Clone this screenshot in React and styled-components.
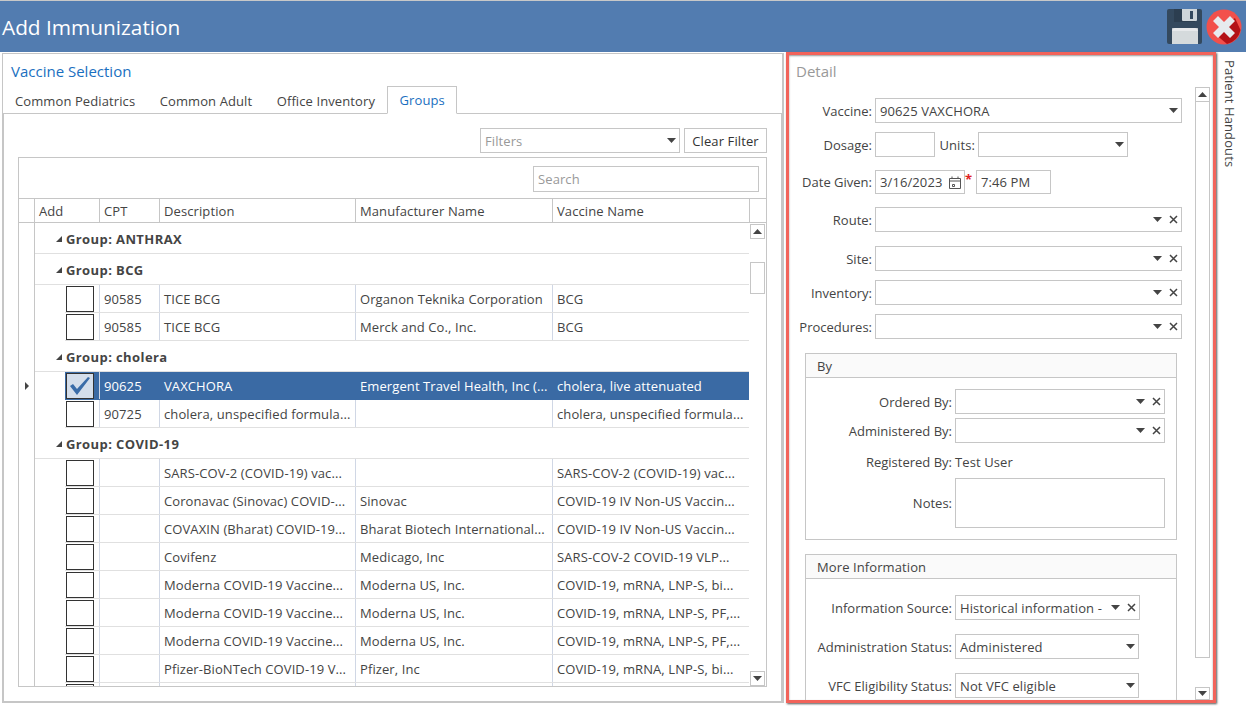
import React from "react";
import styled, { createGlobalStyle } from "styled-components";

const line = "#c6c6c6";
const textColor = "#444";

const GlobalStyle = createGlobalStyle`
  html, body { margin: 0; padding: 0; background: #fff; overflow: hidden; }
  * { box-sizing: border-box; }
  body { font-family: "Open Sans", "Noto Sans", sans-serif; font-size: 13px; letter-spacing: .1px; color: ${textColor}; }
`;

const Page = styled.div`
  width: 1246px;
  height: 706px;
  display: flex;
  flex-direction: column;
  overflow: hidden;
`;

const TitleBar = styled.header`
  height: 52px;
  flex-shrink: 0;
  background: #527cb0;
  border-top: 1px solid #c8c8c8;
  display: flex;
  align-items: center;
  padding: 0 4px 0 2px;
  color: #fff;
`;

const TitleText = styled.h1`
  flex: 1;
  margin: 0;
  font-size: 20.8px;
  font-weight: 400;
  letter-spacing: 0;
`;

const Main = styled.div`
  flex: 1;
  display: flex;
  padding: 1px 0 3px 2px;
  min-height: 0;
`;

const LeftPanel = styled.section`
  width: 782px;
  border: 1px solid ${line};
  border-right-width: 2px;
  display: flex;
  flex-direction: column;
  min-height: 0;
`;

const SectionTitle = styled.div`
  height: 33px;
  padding: 7px 0 0 8px;
  font-size: 15px;
  letter-spacing: 0;
  color: #1a6fc0;
`;

const Tabs = styled.div`
  height: 26px;
  margin-left: -0.25px;
  display: flex;
  align-items: stretch;
`;

const Tab = styled.div`
  display: flex;
  align-items: center;
  padding: 0 11.25px;
  color: ${(p) => (p.$active ? "#1a6fc0" : textColor)};
  border: 1px solid ${(p) => (p.$active ? line : "transparent")};
  border-bottom: ${(p) => (p.$active ? "1px solid #fff" : "none")};
  position: relative;
  z-index: 1;
  height: ${(p) => (p.$active ? "28px" : "26px")};
  margin-top: ${(p) => (p.$active ? "-1px" : "0")};
  white-space: nowrap;
`;

const TabBody = styled.div`
  flex: 1;
  min-height: 0;
  border: 1px solid ${line};
  padding: 14px 14px 14px 14px;
  display: flex;
  flex-direction: column;
`;

const FilterBar = styled.div`
  height: 25px;
  margin-bottom: 4px;
  display: flex;
  justify-content: flex-end;
  gap: 4px;
  flex-shrink: 0;
`;

const Box = styled.div`
  height: ${(p) => p.$h || 25}px;
  width: ${(p) => (p.$w ? `${p.$w}px` : "auto")};
  flex: ${(p) => (p.$w ? "none" : "1")};
  border: 1px solid ${line};
  background: #fff;
  display: flex;
  align-items: center;
  padding: 0 3px 0 4px;
  white-space: nowrap;
  overflow: hidden;
`;

const BoxText = styled.span`
  flex: 1;
  overflow: hidden;
  color: ${(p) => (p.$muted ? "#999" : textColor)};
`;

const Btn = styled.button`
  width: 83px;
  height: 25px;
  border: 1px solid ${line};
  background: #fff;
  padding: 0;
  font: inherit;
  letter-spacing: inherit;
  color: #333;
`;

const Grid = styled.div`
  flex: 1;
  min-height: 0;
  border: 1px solid ${line};
  display: flex;
  flex-direction: column;
  overflow: hidden;
  position: relative;
`;

const SearchRow = styled.div`
  height: 41px;
  flex-shrink: 0;
  padding: 8px 7px 0 0;
  display: flex;
  justify-content: flex-end;
  border-bottom: 1px solid ${line};
`;

const HeadRow = styled.div`
  height: 24px;
  flex-shrink: 0;
  display: flex;
  border-bottom: 1px solid ${line};
`;

const HeadCell = styled.div`
  width: ${(p) => p.$w}px;
  flex-shrink: 0;
  border-right: ${(p) => (p.$last ? "none" : `1px solid ${line}`)};
  padding-left: 4px;
  display: flex;
  align-items: center;
`;

const GridBody = styled.div`
  flex: 1;
  min-height: 0;
  display: flex;
  overflow: hidden;
`;

const Rows = styled.div`
  width: 731px;
  flex-shrink: 0;
`;

const GroupRow = styled.div`
  height: 31px;
  display: flex;
`;

const Indicator = styled.div`
  width: 16px;
  flex-shrink: 0;
  border-right: 1px solid ${line};
  display: flex;
  align-items: center;
  justify-content: center;
`;

const GroupCell = styled.div`
  flex: 1;
  margin-right: 1px;
  border-bottom: 1px solid #e0e0e0;
  display: flex;
  align-items: center;
  gap: 4px;
  padding: 2px 0 0 21px;
  font-weight: 700;
  letter-spacing: .4px;
  color: #444;
`;

const DataRow = styled.div`
  height: 28px;
  display: flex;
`;

const RowCells = styled.div`
  flex: 1;
  margin: 0 1px 0 30px;
  display: flex;
  background: ${(p) => (p.$selected ? "#3a6aa4" : "transparent")};
  color: ${(p) => (p.$selected ? "#fff" : textColor)};
  border-bottom: 1px solid ${(p) => (p.$selected ? "#3a6aa4" : "#e0e0e0")};
`;

const CheckCell = styled.div`
  width: 35px;
  flex-shrink: 0;
  padding: 1px 0 0 1px;
  border-right: 1px solid #d0d7e5;
`;

const CheckBox = styled.div`
  width: 28px;
  height: 26px;
  border: 1px solid #333;
  background: ${(p) => (p.$checked ? "#d4deeb" : "#fff")};
  display: flex;
  align-items: center;
  justify-content: center;
`;

const Cell = styled.div`
  width: ${(p) => p.$w}px;
  flex-shrink: 0;
  padding-left: 4px;
  display: flex;
  align-items: center;
  white-space: nowrap;
  overflow: hidden;
  border-right: ${(p) => (p.$selected || p.$last ? "none" : "1px solid #d0d7e5")};
`;

const GridScroll = styled.div`
  width: 17px;
  flex-shrink: 0;
  padding: 1px 2px 0 0;
  display: flex;
  flex-direction: column;
  align-items: stretch;
`;

const ScrollBtn = styled.div`
  height: ${(p) => p.$h || 15}px;
  flex-shrink: 0;
  border: 1px solid ${line};
  background: #fff;
  display: flex;
  align-items: center;
  justify-content: center;
`;

const ScrollThumb = styled.div`
  height: ${(p) => p.$h}px;
  margin-top: ${(p) => p.$mt || 0}px;
  flex-shrink: 0;
  border: 1px solid ${line};
  border-top-width: ${(p) => (p.$flat ? 0 : 1)}px;
`;

const Spacer = styled.div`
  flex: 1;
`;

const RightPanel = styled.section`
  width: 430px;
  margin: -1px 0 0 2px;
  border: 3px solid #f2635a;
  box-shadow: 1px 1px 2px #555, inset 0 1px 2px #999;
  display: flex;
  flex-direction: column;
  min-height: 0;
  overflow: hidden;
`;

const DetailTitle = styled.div`
  height: 32px;
  flex-shrink: 0;
  padding: 6px 0 0 7px;
  font-size: 15px;
  letter-spacing: 0;
  color: #999;
`;

const DetailBody = styled.div`
  flex: 1;
  min-height: 0;
  display: flex;
  overflow: hidden;
`;

const Form = styled.div`
  width: 392px;
  margin: 0 13px 0 1px;
  padding-top: 11px;
  flex-shrink: 0;
`;

const FieldRow = styled.div`
  display: flex;
  align-items: center;
  gap: 3px;
  margin-top: ${(p) => p.$mt || 0}px;
`;

const Label = styled.div`
  width: ${(p) => p.$w || 82}px;
  flex-shrink: 0;
  text-align: right;
  white-space: nowrap;
  letter-spacing: 0;
`;

const InlineLabel = styled.span`
  width: 37px;
  text-align: right;
`;

const Star = styled.span`
  width: 8px;
  margin-left: -3px;
  color: #e02020;
  font-weight: 700;
  align-self: flex-start;
  line-height: 18px;
`;

const Group = styled.div`
  width: 372px;
  margin: ${(p) => p.$mt}px 0 0 15px;
  border: 1px solid ${line};
  padding-bottom: 11px;
`;

const GroupHead = styled.div`
  height: 24px;
  padding-left: 11px;
  background: #fafafa;
  border-bottom: 1px solid ${line};
  display: flex;
  align-items: center;
`;

const GroupBody = styled.div`
  padding-top: ${(p) => p.$pt}px;
`;

const Handouts = styled.aside`
  flex: 1;
  display: flex;
  justify-content: flex-start;
  align-items: center;
  padding: 7px 2px 0 0;
  writing-mode: vertical-rl;
  line-height: 20px;
  white-space: nowrap;
`;

const DetailScroll = styled.div`
  width: 15px;
  flex-shrink: 0;
  display: flex;
  flex-direction: column;
`;

const ClearIcon = styled.svg`
  margin-left: 7px;
  flex-shrink: 0;
`;

const ArrowDown = () => (
  <svg width="9" height="5" viewBox="0 0 9 5"><path d="M0 0h9L4.5 5z" fill="#444" /></svg>
);

const ArrowUp = () => (
  <svg width="9" height="5" viewBox="0 0 9 5"><path d="M0 5h9L4.5 0z" fill="#444" /></svg>
);

const ClearX = () => (
  <ClearIcon width="9" height="9" viewBox="0 0 9 9">
    <path d="M1 1l7 7M8 1L1 8" stroke="#444" strokeWidth="1.5" />
  </ClearIcon>
);

const GroupArrow = () => (
  <svg width="6" height="6" viewBox="0 0 6 6"><path d="M6 0v6H0z" fill="#444" /></svg>
);

const RowPointer = () => (
  <svg width="4" height="8" viewBox="0 0 4 8"><path d="M0 0l4 4-4 4z" fill="#444" /></svg>
);

const CheckMark = () => (
  <svg width="22" height="20" viewBox="0 0 22 20">
    <path d="M1 10l3-2 4 5L19 1l2 1L8 19z" fill="#3a6ca8" />
  </svg>
);

const CalendarIcon = () => (
  <svg width="12" height="13" viewBox="0 0 12 13" fill="none" stroke="#555">
    <path d="M.5 2.5h11v10H.5zM.5 5h11M3 .5v2M9 .5v2M3.5 8.5h2v2h-2z" />
  </svg>
);

const SaveIcon = () => (
  <svg width="35" height="35" viewBox="0 0 35 35">
    <path d="M2 0h31a2 2 0 0 1 2 2v31a2 2 0 0 1-2 2H2a2 2 0 0 1-2-2V2a2 2 0 0 1 2-2z" fill="#34495e" />
    <path d="M7 0h21v13H7z" fill="#2c3e50" />
    <path d="M15 0h15v11a1 1 0 0 1-1 1H16a1 1 0 0 1-1-1z" fill="#cfd6da" />
    <path d="M23 2h3v8h-3z" fill="#34495e" />
    <path d="M5 22a3 3 0 0 1 3-3h20a3 3 0 0 1 3 3v13H5z" fill="#d5dadc" />
    <path d="M5 19h26v3H5z" fill="#eef0f1" opacity=".7" />
  </svg>
);

const CloseIcon = () => (
  <svg width="36" height="36" viewBox="0 0 36 36">
    <circle cx="18" cy="18" r="17.5" fill="#f2504b" />
    <path d="M29 9l5.5 12A17.5 17.5 0 0 1 21 35L8 24z" fill="#b31217" />
    <path d="M12 7l6 6 6-6 5 5-6 6 6 6-5 5-6-6-6 6-5-5 6-6-6-6z" fill="#e7ebee" />
  </svg>
);

const Combo = ({ w, value, clear }) => (
  <Box $w={w}>
    <BoxText>{value}</BoxText>
    <ArrowDown />
    {clear && <ClearX />}
  </Box>
);

const columns = [
  { title: "CPT", w: 60 },
  { title: "Description", w: 196 },
  { title: "Manufacturer Name", w: 197 },
  { title: "Vaccine Name", w: 197 },
];

const rows = [
  { group: "ANTHRAX" },
  { group: "BCG" },
  { cells: ["90585", "TICE BCG", "Organon Teknika Corporation", "BCG"] },
  { cells: ["90585", "TICE BCG", "Merck and Co., Inc.", "BCG"] },
  { group: "cholera" },
  { cells: ["90625", "VAXCHORA", "Emergent Travel Health, Inc (...", "cholera, live attenuated"], selected: true },
  { cells: ["90725", "cholera, unspecified formula...", "", "cholera, unspecified formula..."] },
  { group: "COVID-19" },
  { cells: ["", "SARS-COV-2 (COVID-19) vac...", "", "SARS-COV-2 (COVID-19) vac..."] },
  { cells: ["", "Coronavac (Sinovac) COVID-...", "Sinovac", "COVID-19 IV Non-US Vaccin..."] },
  { cells: ["", "COVAXIN (Bharat) COVID-19...", "Bharat Biotech International...", "COVID-19 IV Non-US Vaccin..."] },
  { cells: ["", "Covifenz", "Medicago, Inc", "SARS-COV-2 COVID-19 VLP..."] },
  { cells: ["", "Moderna COVID-19 Vaccine...", "Moderna US, Inc.", "COVID-19, mRNA, LNP-S, bi..."] },
  { cells: ["", "Moderna COVID-19 Vaccine...", "Moderna US, Inc.", "COVID-19, mRNA, LNP-S, PF,..."] },
  { cells: ["", "Moderna COVID-19 Vaccine...", "Moderna US, Inc.", "COVID-19, mRNA, LNP-S, PF,..."] },
  { cells: ["", "Pfizer-BioNTech COVID-19 V...", "Pfizer, Inc", "COVID-19, mRNA, LNP-S, bi..."] },
  { cells: ["", "", "", ""] },
];

const VaccineGrid = () => (
  <Grid>
    <SearchRow>
      <Box $w={226} $h={26}><BoxText $muted>Search</BoxText></Box>
    </SearchRow>
    <HeadRow>
      <HeadCell $w={16} />
      <HeadCell $w={65}>Add</HeadCell>
      {columns.map((c) => <HeadCell key={c.title} $w={c.w}>{c.title}</HeadCell>)}
      <HeadCell $w={17} $last />
    </HeadRow>
    <GridBody>
      <Rows>
        {rows.map((row, i) =>
          row.group ? (
            <GroupRow key={i}>
              <Indicator />
              <GroupCell><GroupArrow />Group: {row.group}</GroupCell>
            </GroupRow>
          ) : (
            <DataRow key={i}>
              <Indicator>{row.selected && <RowPointer />}</Indicator>
              <RowCells $selected={row.selected}>
                <CheckCell>
                  <CheckBox $checked={row.selected}>{row.selected && <CheckMark />}</CheckBox>
                </CheckCell>
                {row.cells.map((text, j) => (
                  <Cell key={j} $w={j === 3 ? 195 : columns[j].w} $selected={row.selected} $last={j === 3}>{text}</Cell>
                ))}
              </RowCells>
            </DataRow>
          )
        )}
      </Rows>
      <GridScroll>
        <ScrollBtn><ArrowUp /></ScrollBtn>
        <ScrollThumb $h={32} $mt={23} />
        <Spacer />
        <ScrollBtn><ArrowDown /></ScrollBtn>
      </GridScroll>
    </GridBody>
  </Grid>
);

const DetailForm = () => (
  <Form>
    <FieldRow>
      <Label>Vaccine:</Label>
      <Combo w={307} value="90625 VAXCHORA" />
    </FieldRow>
    <FieldRow $mt={9}>
      <Label>Dosage:</Label>
      <Box $w={60} />
      <InlineLabel>Units:</InlineLabel>
      <Combo w={150} />
    </FieldRow>
    <FieldRow $mt={13}>
      <Label>Date Given:</Label>
      <Box $w={90} $h={24}>
        <BoxText>3/16/2023</BoxText>
        <CalendarIcon />
      </Box>
      <Star>*</Star>
      <Box $w={75} $h={24}><BoxText>7:46 PM</BoxText></Box>
    </FieldRow>
    <FieldRow $mt={13}>
      <Label>Route:</Label>
      <Combo w={307} clear />
    </FieldRow>
    <FieldRow $mt={14}>
      <Label>Site:</Label>
      <Combo w={307} clear />
    </FieldRow>
    <FieldRow $mt={9}>
      <Label>Inventory:</Label>
      <Combo w={307} clear />
    </FieldRow>
    <FieldRow $mt={9}>
      <Label>Procedures:</Label>
      <Combo w={307} clear />
    </FieldRow>

    <Group $mt={14}>
      <GroupHead>By</GroupHead>
      <GroupBody $pt={11}>
        <FieldRow>
          <Label $w={146}>Ordered By:</Label>
          <Combo w={210} clear />
        </FieldRow>
        <FieldRow $mt={4}>
          <Label $w={146}>Administered By:</Label>
          <Combo w={210} clear />
        </FieldRow>
        <FieldRow $mt={10}>
          <Label $w={146}>Registered By:</Label>
          <span>Test User</span>
        </FieldRow>
        <FieldRow $mt={7}>
          <Label $w={146}>Notes:</Label>
          <Box $w={210} $h={50} />
        </FieldRow>
      </GroupBody>
    </Group>

    <Group $mt={14}>
      <GroupHead>More Information</GroupHead>
      <GroupBody $pt={16}>
        <FieldRow>
          <Label $w={146}>Information Source:</Label>
          <Combo w={185} value="Historical information -" clear />
        </FieldRow>
        <FieldRow $mt={14}>
          <Label $w={146}>Administration Status:</Label>
          <Combo w={184} value="Administered" />
        </FieldRow>
        <FieldRow $mt={14}>
          <Label $w={146}>VFC Eligibility Status:</Label>
          <Combo w={184} value="Not VFC eligible" />
        </FieldRow>
      </GroupBody>
    </Group>
  </Form>
);

const IconGap = styled.span`
  width: 4px;
`;

export default function App() {
  return (
    <Page>
      <GlobalStyle />
      <TitleBar>
        <TitleText>Add Immunization</TitleText>
        <SaveIcon />
        <IconGap />
        <CloseIcon />
      </TitleBar>
      <Main>
        <LeftPanel>
          <SectionTitle>Vaccine Selection</SectionTitle>
          <Tabs>
            <Tab>Common Pediatrics</Tab>
            <Tab>Common Adult</Tab>
            <Tab>Office Inventory</Tab>
            <Tab $active>Groups</Tab>
          </Tabs>
          <TabBody>
            <FilterBar>
              <Box $w={200}>
                <BoxText $muted>Filters</BoxText>
                <ArrowDown />
              </Box>
              <Btn>Clear Filter</Btn>
            </FilterBar>
            <VaccineGrid />
          </TabBody>
        </LeftPanel>
        <RightPanel>
          <DetailTitle>Detail</DetailTitle>
          <DetailBody>
            <DetailForm />
            <DetailScroll>
              <ScrollBtn><ArrowUp /></ScrollBtn>
              <ScrollThumb $h={556} $flat />
              <Spacer />
              <ScrollBtn $h={13}><ArrowDown /></ScrollBtn>
            </DetailScroll>
          </DetailBody>
        </RightPanel>
        <Handouts>Patient Handouts</Handouts>
      </Main>
    </Page>
  );
}
